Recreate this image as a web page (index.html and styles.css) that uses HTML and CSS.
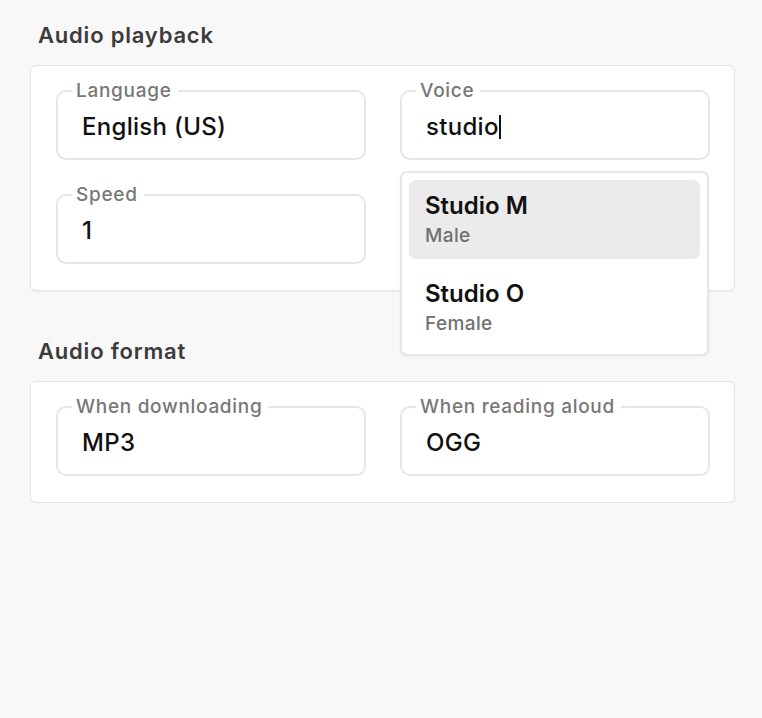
FILE: index.html
```html
<!DOCTYPE html>
<html lang="en">
<head>
<meta charset="utf-8">
<title>Audio settings</title>
<link rel="stylesheet" href="styles.css">
</head>
<body>
<main class="page">
  <section class="section">
    <h2 class="section-title">Audio playback</h2>
    <div class="card">
      <fieldset class="field">
        <legend class="field-label">Language</legend>
        <div class="field-value">English (US)</div>
      </fieldset>
      <div class="combo">
        <fieldset class="field">
          <legend class="field-label">Voice</legend>
          <div class="field-value">studio<span class="caret"></span></div>
        </fieldset>
        <ul class="menu">
          <li class="menu-item is-active">
            <div class="menu-title">Studio M</div>
            <div class="menu-sub">Male</div>
          </li>
          <li class="menu-item">
            <div class="menu-title">Studio O</div>
            <div class="menu-sub">Female</div>
          </li>
        </ul>
      </div>
      <fieldset class="field">
        <legend class="field-label">Speed</legend>
        <div class="field-value">1</div>
      </fieldset>
    </div>
  </section>
  <section class="section">
    <h2 class="section-title">Audio format</h2>
    <div class="card">
      <fieldset class="field">
        <legend class="field-label">When downloading</legend>
        <div class="field-value">MP3</div>
      </fieldset>
      <fieldset class="field">
        <legend class="field-label">When reading aloud</legend>
        <div class="field-value">OGG</div>
      </fieldset>
    </div>
  </section>
</main>
</body>
</html>
```
FILE: styles.css
```css
html, body {
  margin: 0;
  padding: 0;
  background: #f8f8f8;
  font-family: Inter, "Noto Sans", "Liberation Sans", sans-serif;
  color: #111;
}
.page {
  padding: 22px 27px 0 30px;
  display: flex;
  flex-direction: column;
  gap: 47px;
}
.section-title {
  margin: 0 0 17px 8px;
  font-size: 22px;
  line-height: 26px;
  font-weight: 600;
  letter-spacing: 0.8px;
  color: #3b3b3b;
}
.card {
  background: #fff;
  border: 1px solid #e4e4e6;
  border-radius: 6px;
  box-shadow: 0 1px 2px rgba(0,0,0,0.05);
  padding: 15px 25px 26px 25px;
  display: grid;
  grid-template-columns: 310px 310px;
  column-gap: 34px;
  row-gap: 25px;
}
.combo {
  position: relative;
}
.field {
  margin: 0;
  padding: 0 24px 17px 24px;
  border: 2px solid #e6e6e8;
  border-radius: 10px;
  min-width: 0;
}
.field-label {
  margin-left: -10px;
  padding: 0 6px 0 4px;
  font-size: 19px;
  line-height: 20px;
  font-weight: 500;
  letter-spacing: 0.7px;
  color: #777;
}
.field-value {
  margin-top: 12px;
  font-size: 24px;
  line-height: 28px;
  font-weight: 500;
  letter-spacing: 0.3px;
  color: #111;
  display: flex;
  align-items: center;
}
.caret {
  display: inline-block;
  width: 2px;
  height: 24px;
  background: #111;
}
.menu {
  position: absolute;
  left: 0;
  top: 90px;
  width: 291px;
  margin: 0;
  padding: 7px;
  list-style: none;
  background: #fff;
  border: 2px solid #e6e6e8;
  border-radius: 7px;
  box-shadow: 0 1px 3px rgba(0,0,0,0.05);
  display: flex;
  flex-direction: column;
  gap: 9px;
  z-index: 2;
}
.menu-item {
  padding: 12px 16px 12px 16px;
  border-radius: 7px;
}
.menu-item.is-active {
  background: #ebebeb;
}
.menu-title {
  font-size: 24px;
  line-height: 28px;
  font-weight: 600;
  color: #111;
}
.menu-sub {
  margin-top: 5px;
  font-size: 19px;
  line-height: 22px;
  font-weight: 500;
  letter-spacing: 0.4px;
  color: #707070;
}
```
